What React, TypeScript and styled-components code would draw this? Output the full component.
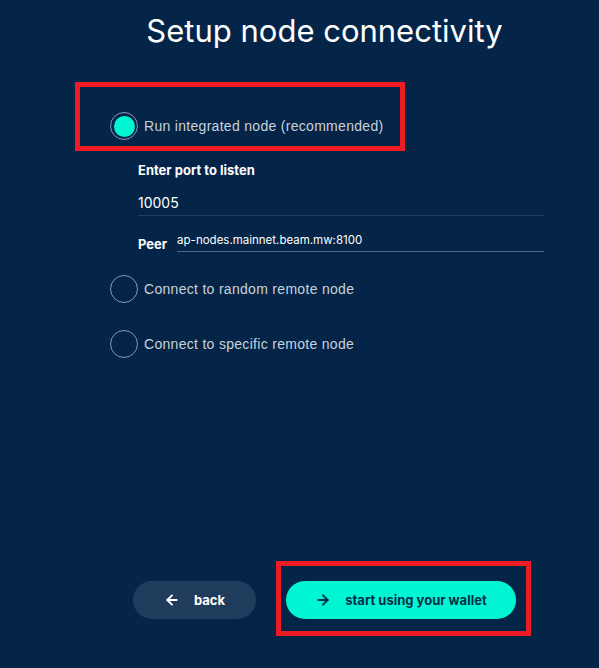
import React, { useState } from "react";
import styled, { createGlobalStyle } from "styled-components";
import { ArrowLeft, ArrowRight } from "lucide-react";

const GlobalStyle = createGlobalStyle`
    html, body {
        margin: 0;
        padding: 0;
        background-color: #042548;
    }

    * {
        box-sizing: border-box;
    }
`;

const Page = styled.div`
    position: relative;
    min-height: 100vh;
    padding: 0 0 49px 50px;
    display: flex;
    flex-direction: column;
    align-items: center;
    background-color: #042548;
    font-family: Inter, "Noto Sans", sans-serif;
    color: #ffffff;
`;

const Title = styled.h1`
    margin: 11px 0 0;
    font-size: 31px;
    line-height: 40px;
    font-weight: 400;
    color: #ffffff;
`;

const Options = styled.div`
    align-self: flex-start;
    margin: 61px 0 0 60px;
    width: 434px;
    display: flex;
    flex-direction: column;
`;

const RadioRow = styled.label<{ $gap: number }>`
    display: flex;
    align-items: center;
    gap: 6px;
    height: 28px;
    margin-top: ${({ $gap }) => $gap}px;
    cursor: pointer;
`;

const RadioCircle = styled.span<{ $checked: boolean }>`
    width: 28px;
    height: 28px;
    border-radius: 50%;
    border: 1px solid #8a9bb0;
    display: flex;
    align-items: center;
    justify-content: center;
    flex-shrink: 0;

    &::after {
        content: "";
        width: 21px;
        height: 21px;
        border-radius: 50%;
        background-color: #00f6d2;
        display: ${({ $checked }) => ($checked ? "block" : "none")};
    }
`;

const RadioText = styled.span`
    font-family: "Liberation Sans", Arial, sans-serif;
    font-size: 14px;
    letter-spacing: 0.3px;
    color: #c9d1db;
`;

const NodeSettings = styled.div`
    margin: 22px 0 0 28px;
    display: flex;
    flex-direction: column;
`;

const FieldLabel = styled.div`
    font-size: 13px;
    line-height: 16px;
    font-weight: 700;
    color: #ffffff;
`;

const PortInput = styled.div`
    margin-top: 16px;
    padding-bottom: 3px;
    font-size: 14px;
    line-height: 18px;
    color: #ffffff;
    border-bottom: 1px solid #1f3e62;
`;

const PeerRow = styled.div`
    margin-top: 16px;
    display: flex;
    align-items: flex-end;
    gap: 10px;
`;

const PeerValue = styled.div`
    flex: 1;
    padding-bottom: 3px;
    font-size: 11.5px;
    line-height: 16px;
    color: #ffffff;
    border-bottom: 1px solid #4d6a8c;
`;

const Footer = styled.div`
    margin-top: auto;
    display: flex;
    gap: 30px;
`;

const Button = styled.button<{ $primary?: boolean }>`
    height: 38px;
    border: none;
    border-radius: 19px;
    display: flex;
    align-items: center;
    justify-content: center;
    gap: 14px;
    font-family: Inter, "Noto Sans", sans-serif;
    font-size: 13px;
    font-weight: 700;
    cursor: pointer;
    width: ${({ $primary }) => ($primary ? "230px" : "123px")};
    background-color: ${({ $primary }) =>
        $primary ? "#00f6d2" : "rgba(255, 255, 255, 0.11)"};
    color: ${({ $primary }) => ($primary ? "#032e49" : "#ffffff")};
`;

const Highlight = styled.div<{ $x: number; $y: number; $w: number; $h: number }>`
    position: absolute;
    left: ${({ $x }) => $x}px;
    top: ${({ $y }) => $y}px;
    width: ${({ $w }) => $w}px;
    height: ${({ $h }) => $h}px;
    border: 5px solid #ed1c24;
    pointer-events: none;
`;

const modes = [
    "Run integrated node (recommended)",
    "Connect to random remote node",
    "Connect to specific remote node",
];

function App() {
    const [mode, setMode] = useState(0);

    return (
        <>
            <GlobalStyle />
            <Page>
                <Title>Setup node connectivity</Title>
                <Options>
                    <RadioRow $gap={0} onClick={() => setMode(0)}>
                        <RadioCircle $checked={mode === 0} />
                        <RadioText>{modes[0]}</RadioText>
                    </RadioRow>
                    {mode === 0 && (
                        <NodeSettings>
                            <FieldLabel>Enter port to listen</FieldLabel>
                            <PortInput>10005</PortInput>
                            <PeerRow>
                                <FieldLabel>Peer</FieldLabel>
                                <PeerValue>ap-nodes.mainnet.beam.mw:8100</PeerValue>
                            </PeerRow>
                        </NodeSettings>
                    )}
                    <RadioRow $gap={mode === 0 ? 23 : 27} onClick={() => setMode(1)}>
                        <RadioCircle $checked={mode === 1} />
                        <RadioText>{modes[1]}</RadioText>
                    </RadioRow>
                    <RadioRow $gap={27} onClick={() => setMode(2)}>
                        <RadioCircle $checked={mode === 2} />
                        <RadioText>{modes[2]}</RadioText>
                    </RadioRow>
                </Options>
                <Footer>
                    <Button>
                        <ArrowLeft size={16} strokeWidth={2.8} />
                        back
                    </Button>
                    <Button $primary>
                        <ArrowRight size={16} strokeWidth={2.8} />
                        start using your wallet
                    </Button>
                </Footer>
                <Highlight $x={75} $y={82} $w={330} $h={69} />
                <Highlight $x={276} $y={561} $w={255} $h={75} />
            </Page>
        </>
    );
}

export default App;
